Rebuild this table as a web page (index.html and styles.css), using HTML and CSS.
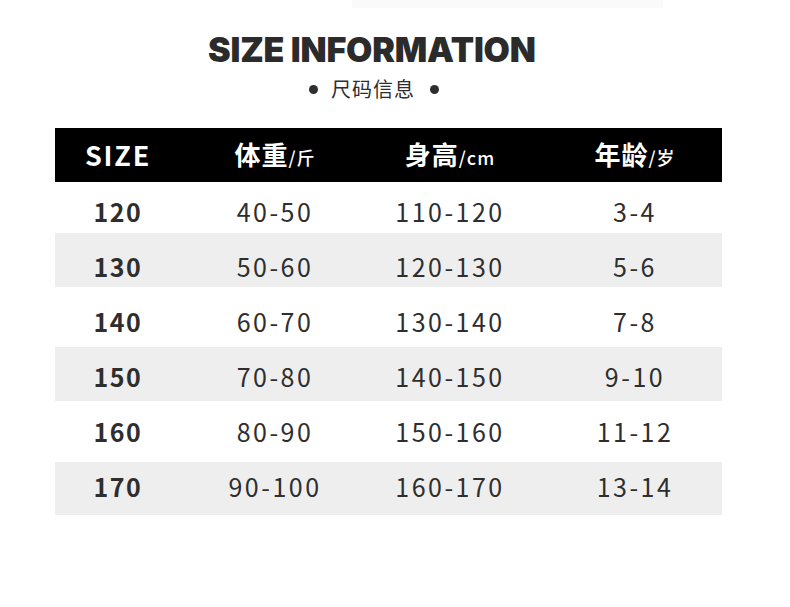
FILE: index.html
```html
<!DOCTYPE html>
<html lang="zh">
<head>
<meta charset="utf-8">
<title>Size Information</title>
<link rel="stylesheet" href="styles.css">
</head>
<body>
<div class="page">
  <div class="top-strip"></div>
  <h1 class="title">SIZE INFORMATION</h1>
  <div class="subtitle"><span class="dot"></span><span class="sub-text">尺码信息</span><span class="dot"></span></div>
  <div class="table">
    <div class="row head">
      <div class="cell c1"><span class="h-size">SIZE</span></div>
      <div class="cell c2"><span class="h-main">体重</span><span class="h-unit">/斤</span></div>
      <div class="cell c3"><span class="h-main">身高</span><span class="h-unit">/cm</span></div>
      <div class="cell c4"><span class="h-main">年龄</span><span class="h-unit">/岁</span></div>
    </div>
    <div class="row r1">
      <div class="cell c1 size">120</div><div class="cell c2">40-50</div><div class="cell c3">110-120</div><div class="cell c4">3-4</div>
    </div>
    <div class="row r2 alt">
      <div class="cell c1 size">130</div><div class="cell c2">50-60</div><div class="cell c3">120-130</div><div class="cell c4">5-6</div>
    </div>
    <div class="row r3">
      <div class="cell c1 size">140</div><div class="cell c2">60-70</div><div class="cell c3">130-140</div><div class="cell c4">7-8</div>
    </div>
    <div class="row r4 alt">
      <div class="cell c1 size">150</div><div class="cell c2">70-80</div><div class="cell c3">140-150</div><div class="cell c4">9-10</div>
    </div>
    <div class="row r5">
      <div class="cell c1 size">160</div><div class="cell c2">80-90</div><div class="cell c3">150-160</div><div class="cell c4">11-12</div>
    </div>
    <div class="row r6 alt">
      <div class="cell c1 size">170</div><div class="cell c2">90-100</div><div class="cell c3">160-170</div><div class="cell c4">13-14</div>
    </div>
  </div>
</div>
</body>
</html>
```
FILE: styles.css
```css
* { box-sizing: border-box; margin: 0; padding: 0; }
html, body { background: #ffffff; }
body {
  width: 790px;
  height: 607px;
  overflow: hidden;
  font-family: "Noto Sans CJK SC", "Noto Sans", sans-serif;
  color: #2e2e2e;
}
.page { display: flex; flex-direction: column; }
.top-strip {
  margin-left: 352px;
  width: 311px;
  height: 8px;
  background: #fafafa;
}
.title {
  margin-top: 22px;
  margin-left: 208px;
  width: 326px;
  height: 40px;
  line-height: 40px;
  font-family: "Inter", "Liberation Sans", sans-serif;
  font-weight: 900;
  font-size: 34px;
  color: #2b2b2b;
  letter-spacing: -0.2px;
  white-space: nowrap;
}
.subtitle {
  margin-top: 7px;
  margin-left: 309px;
  height: 24px;
  display: flex;
  align-items: center;
}
.dot {
  width: 9px;
  height: 9px;
  border-radius: 50%;
  background: #2e2e2e;
}
.sub-text {
  margin: 0 15px 0 13px;
  font-size: 20px;
  line-height: 24px;
  letter-spacing: 1px;
  color: #2e2e2e;
}
.table {
  margin-top: 27px;
  margin-left: 55px;
  width: 667px;
}
.row {
  display: grid;
  grid-template-columns: 126px 188px 162px 1fr;
  align-items: start;
}
.row.alt { background: #eeeeee; }
.head {
  background: #000000;
  color: #ffffff;
  height: 54px;
  align-items: center;
}
.cell {
  text-align: center;
  font-size: 25px;
  line-height: 30px;
  letter-spacing: 2.5px;
  white-space: nowrap;
}
.cell.c4 { padding-left: 17px; }
.cell.size { font-weight: 700; letter-spacing: 1.5px; }
.h-size { font-weight: 700; font-size: 27px; letter-spacing: 1.8px; }
.h-main { font-weight: 700; font-size: 26px; letter-spacing: 1px; }
.h-unit { font-size: 18px; font-weight: 500; letter-spacing: 1px; }
.r1 { height: 51px; padding-top: 14px; }
.r2 { height: 54px; padding-top: 18px; }
.r3 { height: 60px; padding-top: 19px; }
.r4 { height: 54px; padding-top: 14px; }
.r5 { height: 61px; padding-top: 15px; }
.r6 { height: 53px; padding-top: 9px; }
```
